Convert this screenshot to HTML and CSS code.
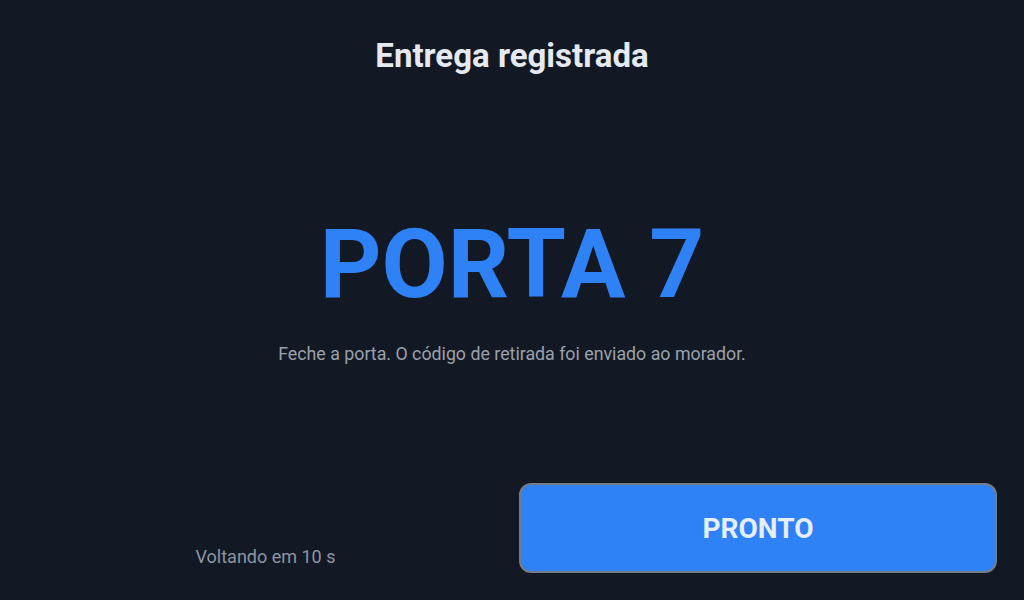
FILE: index.html
```html
<!DOCTYPE html>
<html lang="pt-BR">
<head>
<meta charset="utf-8">
<title>Entrega registrada</title>
<link rel="stylesheet" href="styles.css">
</head>
<body>
<div class="screen">
  <header class="header">
    <h1 class="title">Entrega registrada</h1>
  </header>
  <main class="main">
    <div class="door">PORTA 7</div>
    <p class="hint">Feche a porta. O código de retirada foi enviado ao morador.</p>
  </main>
  <footer class="footer">
    <div class="countdown">Voltando em 10 s</div>
    <button class="done">PRONTO</button>
  </footer>
</div>
</body>
</html>
```

FILE: styles.css
```css
* { box-sizing: border-box; }
html, body {
  margin: 0;
  padding: 0;
  background: #131924;
}
body {
  font-family: Roboto, "Noto Sans", "Liberation Sans", sans-serif;
  width: 1024px;
  height: 600px;
  overflow: hidden;
}
.screen {
  display: flex;
  flex-direction: column;
  height: 600px;
}
.header {
  padding-top: 35px;
  text-align: center;
}
.title {
  margin: 0;
  font-size: 33px;
  line-height: 42px;
  font-weight: 700;
  color: #e5e9f0;
}
.main {
  flex: 1;
  display: flex;
  flex-direction: column;
  align-items: center;
  padding-top: 139px;
}
.door {
  font-size: 96px;
  line-height: 96px;
  font-weight: 700;
  color: #2f82f6;
}
.hint {
  margin: 30px 0 0;
  font-size: 17.8px;
  line-height: 24px;
  color: #9aa1ad;
}
.footer {
  display: flex;
  align-items: flex-end;
  gap: 12px;
  padding: 0 27px 27px 24px;
}
.countdown {
  flex: 1;
  text-align: center;
  font-size: 18px;
  line-height: 18px;
  color: #8d95a2;
  padding-bottom: 7px;
}
.done {
  width: 478px;
  height: 90px;
  border: 2px solid #757c88;
  border-radius: 12px;
  background: #2f82f6;
  color: #e6eefa;
  font-family: inherit;
  font-size: 28px;
  font-weight: 700;
  padding: 0;
  cursor: pointer;
}
```
